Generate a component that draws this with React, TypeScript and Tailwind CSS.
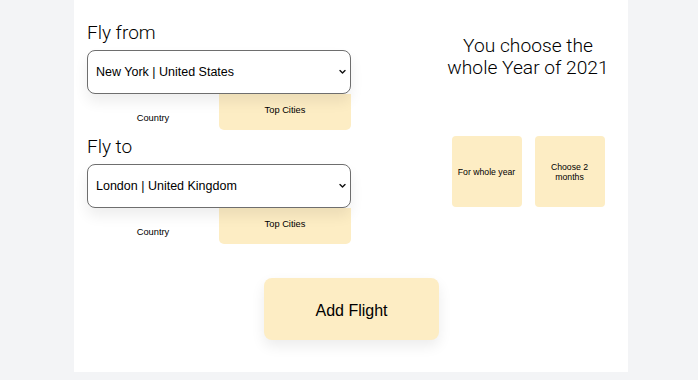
import React from "react";

const font = "font-['Liberation_Sans',Arial,sans-serif]";
const light = "font-['Roboto','Liberation_Sans',sans-serif] font-light";

function Chevron() {
  return (
    <svg
      className="pointer-events-none absolute right-[5px] top-1/2 -translate-y-1/2"
      width="7"
      height="5"
      viewBox="0 0 7 5"
      fill="none"
    >
      <path d="M1 1l2.5 2.5L6 1" stroke="#111" strokeWidth="1.4" strokeLinecap="round" strokeLinejoin="round" />
    </svg>
  );
}

function CityPicker({ label, value }: { label: string; value: string }) {
  return (
    <div>
      <h2 className={`text-[19px] leading-[28px] text-black ${light}`}>{label}</h2>
      <div className="relative mt-[3px]">
        <select
          defaultValue={value}
          className="block h-[44px] w-full appearance-none rounded-[8px] border border-[#6e6e6e] bg-white pl-[8px] text-[12.5px] text-black shadow-[0_8px_14px_rgba(0,0,0,0.07)] outline-none"
        >
          <option>{value}</option>
        </select>
        <Chevron />
      </div>
      <div className="flex">
        <button className="flex-1 pt-[13px] text-[9.3px] text-black">Country</button>
        <button className="h-[36px] w-[132px] rounded-b-[5px] bg-[#fdedc4] pb-[2px] text-[9.3px] text-black">
          Top Cities
        </button>
      </div>
    </div>
  );
}

export default function App() {
  return (
    <div className={`min-h-[380px] bg-[#f3f4f6] ${font}`}>
      <div className="ml-[74px] flex h-[372px] w-[554px] flex-col bg-white">
        <div className="flex">
          <div className="ml-[13px] w-[264px] pt-[19px]">
            <CityPicker label="Fly from" value="New York | United States" />
            <div className="mt-[3px]">
              <CityPicker label="Fly to" value="London | United Kingdom" />
            </div>
          </div>
          <div className="ml-[89px] flex w-[176px] flex-col items-center pt-[35px]">
            <p className={`text-center text-[19.2px] leading-[22px] text-black ${light}`}>
              You choose the
              <br />
              whole Year of 2021
            </p>
            <div className="mt-[57px] flex gap-[13px]">
              <button className="h-[71px] w-[70px] rounded-[4px] bg-[#fdedc4] px-[6px] text-[8.7px] leading-[10px] text-black">
                For whole year
              </button>
              <button className="h-[71px] w-[70px] rounded-[4px] bg-[#fdedc4] px-[10px] text-[8.7px] leading-[10px] text-black">
                Choose 2 months
              </button>
            </div>
          </div>
        </div>
        <div className="mt-[34px] flex justify-center pl-[1px]">
          <button className="h-[62px] w-[175px] rounded-[8px] bg-[#fdedc4] pt-[3px] text-[16px] text-black shadow-[0_6px_14px_rgba(0,0,0,0.08)]">
            Add Flight
          </button>
        </div>
      </div>
    </div>
  );
}
